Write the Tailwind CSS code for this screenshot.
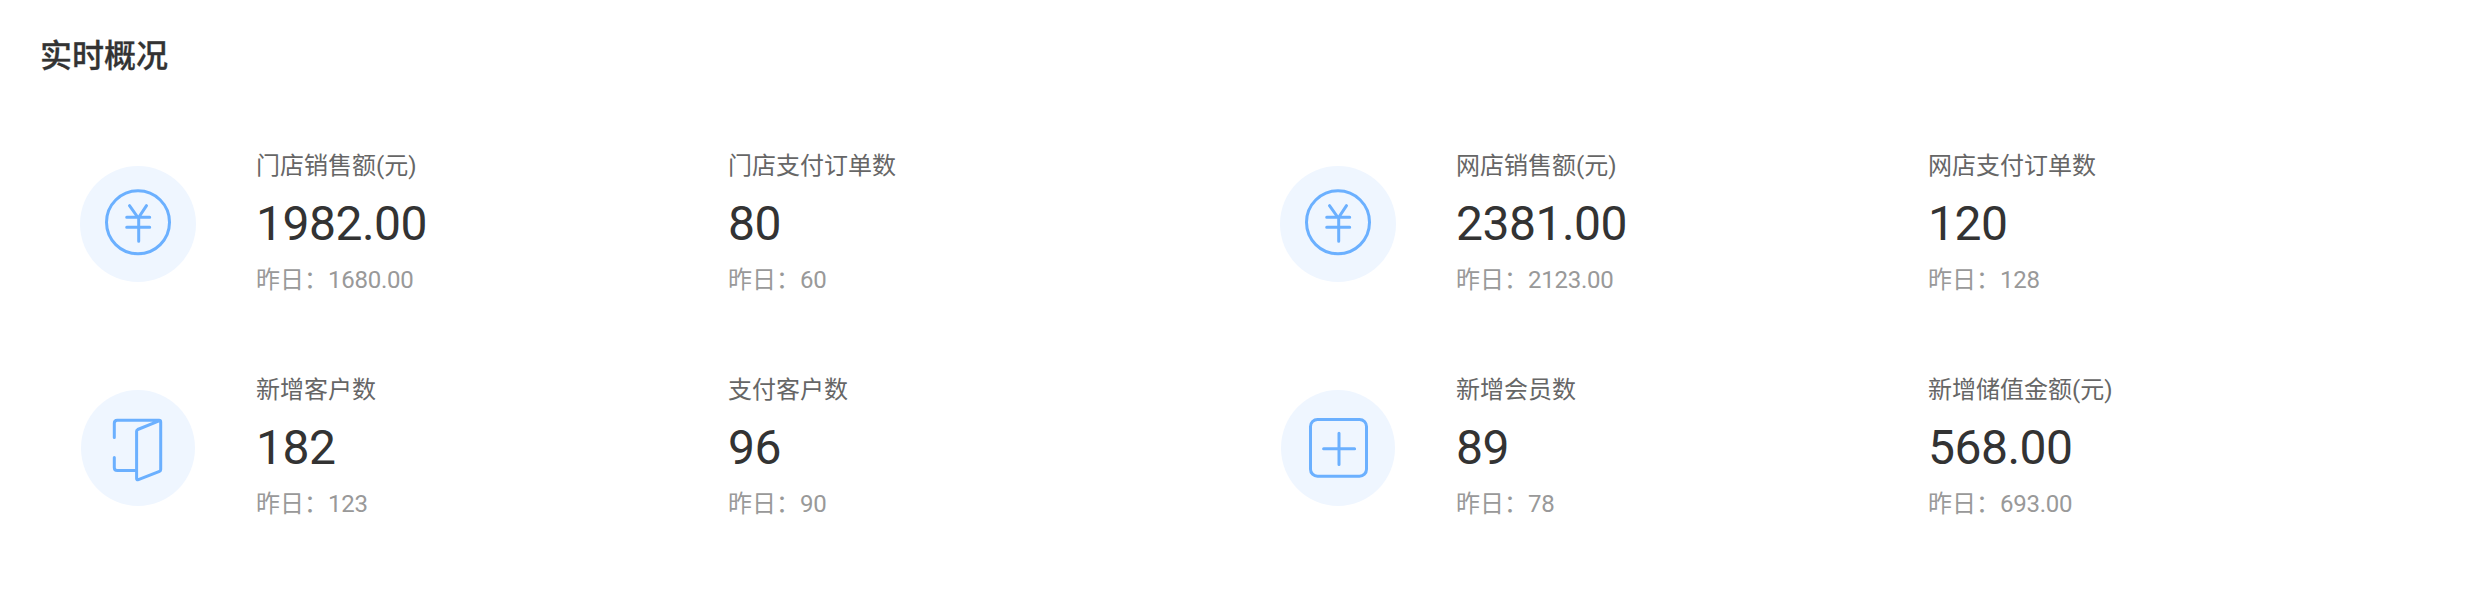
<!DOCTYPE html>
<html lang="zh-CN">
<head>
<meta charset="utf-8">
<title>实时概况</title>
<script src="https://cdn.jsdelivr.net/npm/@tailwindcss/browser@4"></script>
</head>
<body class="bg-white text-[#333333] font-[Roboto,'Noto_Sans_CJK_SC',sans-serif]">
<main class="h-[600px] w-[2480px] px-10 pt-8">
  <h1 class="h-12 text-[32px] leading-[48px] font-medium [-webkit-text-stroke:0.3px]">实时概况</h1>
  <div class="mt-[68px] grid grid-cols-2 gap-y-[74px]">
    <section class="flex h-[150px] items-start pl-10">
      <svg class="mt-[18px] mr-[60px] size-[116px] shrink-0" viewBox="0 0 116 116" fill="none" stroke="#6bb0ff" stroke-width="3" stroke-linecap="round" stroke-linejoin="round"><circle cx="58" cy="58" r="58" fill="#eff6ff" stroke="none"/><circle cx="58" cy="56.3" r="31.5"/><path d="M49.5 39.7L58.3 52L66.5 39.7M46.7 51.3H69.7M46.7 61.2H69.7M58.7 52V75.2"/></svg>
      <div class="w-[472px]"><p class="text-2xl leading-9 text-[#666666]">门店销售额(元)</p><p class="mt-[11px] text-5xl leading-[57px] tracking-[-0.5px]">1982.00</p><p class="mt-2.5 text-2xl leading-9 text-[#999999]">昨日：<span class="tracking-[-0.25px]">1680.00</span></p></div>
      <div class="w-[472px]"><p class="text-2xl leading-9 text-[#666666]">门店支付订单数</p><p class="mt-[11px] text-5xl leading-[57px] tracking-[-0.5px]">80</p><p class="mt-2.5 text-2xl leading-9 text-[#999999]">昨日：<span class="tracking-[-0.25px]">60</span></p></div>
    </section>
    <section class="flex h-[150px] items-start pl-10">
      <svg class="mt-[18px] mr-[60px] size-[116px] shrink-0" viewBox="0 0 116 116" fill="none" stroke="#6bb0ff" stroke-width="3" stroke-linecap="round" stroke-linejoin="round"><circle cx="58" cy="58" r="58" fill="#eff6ff" stroke="none"/><circle cx="58" cy="56.3" r="31.5"/><path d="M49.5 39.7L58.3 52L66.5 39.7M46.7 51.3H69.7M46.7 61.2H69.7M58.7 52V75.2"/></svg>
      <div class="w-[472px]"><p class="text-2xl leading-9 text-[#666666]">网店销售额(元)</p><p class="mt-[11px] text-5xl leading-[57px] tracking-[-0.5px]">2381.00</p><p class="mt-2.5 text-2xl leading-9 text-[#999999]">昨日：<span class="tracking-[-0.25px]">2123.00</span></p></div>
      <div class="w-[472px]"><p class="text-2xl leading-9 text-[#666666]">网店支付订单数</p><p class="mt-[11px] text-5xl leading-[57px] tracking-[-0.5px]">120</p><p class="mt-2.5 text-2xl leading-9 text-[#999999]">昨日：<span class="tracking-[-0.25px]">128</span></p></div>
    </section>
    <section class="flex h-[150px] items-start pl-10">
      <svg class="mt-[18px] mr-[60px] size-[116px] shrink-0" viewBox="0 0 116 116" fill="none" stroke="#6bb0ff" stroke-width="3" stroke-linecap="round" stroke-linejoin="round"><ellipse cx="58" cy="58" rx="57" ry="58" fill="#eff6ff" stroke="none"/><path d="M34.3 47.5V33.3Q34.3 30.3 37.3 30.3H79Q80.7 30.3 80.7 32V79.5Q80.7 80.8 79.5 81.3L58.4 89.6Q56.6 90.2 56.6 88.5V41.2Q56.6 40 57.7 39.5L79.7 30.7M34.3 67.5V77.5Q34.3 80.5 37.3 80.5H56"/></svg>
      <div class="w-[472px]"><p class="text-2xl leading-9 text-[#666666]">新增客户数</p><p class="mt-[11px] text-5xl leading-[57px] tracking-[-0.5px]">182</p><p class="mt-2.5 text-2xl leading-9 text-[#999999]">昨日：<span class="tracking-[-0.25px]">123</span></p></div>
      <div class="w-[472px]"><p class="text-2xl leading-9 text-[#666666]">支付客户数</p><p class="mt-[11px] text-5xl leading-[57px] tracking-[-0.5px]">96</p><p class="mt-2.5 text-2xl leading-9 text-[#999999]">昨日：<span class="tracking-[-0.25px]">90</span></p></div>
    </section>
    <section class="flex h-[150px] items-start pl-10">
      <svg class="mt-[18px] mr-[60px] size-[116px] shrink-0" viewBox="0 0 116 116" fill="none" stroke="#6bb0ff" stroke-width="3" stroke-linecap="round" stroke-linejoin="round"><ellipse cx="58" cy="58" rx="57" ry="58" fill="#eff6ff" stroke="none"/><rect x="30.5" y="29.5" width="56" height="56.7" rx="7"/><path d="M59 43.2V74.6M43.6 58.8H74.6"/></svg>
      <div class="w-[472px]"><p class="text-2xl leading-9 text-[#666666]">新增会员数</p><p class="mt-[11px] text-5xl leading-[57px] tracking-[-0.5px]">89</p><p class="mt-2.5 text-2xl leading-9 text-[#999999]">昨日：<span class="tracking-[-0.25px]">78</span></p></div>
      <div class="w-[472px]"><p class="text-2xl leading-9 text-[#666666]">新增储值金额(元)</p><p class="mt-[11px] text-5xl leading-[57px] tracking-[-0.5px]">568.00</p><p class="mt-2.5 text-2xl leading-9 text-[#999999]">昨日：<span class="tracking-[-0.25px]">693.00</span></p></div>
    </section>
  </div>
</main>
</body>
</html>
